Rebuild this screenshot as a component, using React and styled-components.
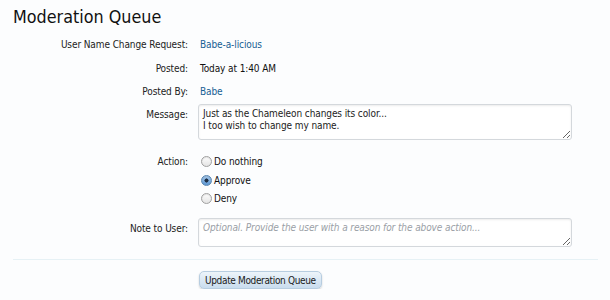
import React from "react";
import styled, { createGlobalStyle } from "styled-components";

const Global = createGlobalStyle`
  html, body { margin: 0; padding: 0; background: #fcfdfe; }
  body { font-family: Tahoma, "DejaVu Sans Condensed", "DejaVu Sans", sans-serif; font-size: 10px; letter-spacing: -0.1px; color: #000; }
`;

const Page = styled.div`
  padding: 5px 13px 0 13px;
  width: 585px;
`;

const Title = styled.h1`
  margin: 0 0 8px 0;
  font-size: 17.8px;
  font-weight: normal;
  letter-spacing: 0;
  color: #111;
  line-height: 24px;
`;

const Form = styled.div`
  display: flex;
  flex-direction: column;
`;

const Row = styled.div`
  display: grid;
  grid-template-columns: 175px 1fr;
  column-gap: 11px;
  align-items: start;
  margin-bottom: ${(p) => p.$mb ?? 8.5}px;
`;

const Label = styled.div`
  text-align: right;
  color: #222;
  line-height: 15px;
  padding-top: ${(p) => p.$pt ?? 0}px;
`;

const Value = styled.div`
  line-height: 15px;
  color: #111;
  padding-left: 1px;
`;

const Link = styled.a`
  color: #176093;
  text-decoration: none;
`;

const TextArea = styled.textarea`
  box-sizing: border-box;
  width: 374px;
  height: ${(p) => p.$h}px;
  margin-left: -1px;
  display: block;
  font-family: inherit;
  font-size: 10px;
  letter-spacing: -0.1px;
  line-height: 12px;
  color: #222;
  padding: 3px 4px;
  border: 1px solid #d4d8dc;
  border-radius: 3px;
  background: #fff;
  box-shadow: inset 0 1px 2px rgba(0,0,0,0.08);
  resize: vertical;
  &::placeholder { color: #9aa0a6; font-style: italic; }
`;

const Options = styled.div`
  display: flex;
  flex-direction: column;
  gap: 3.5px;
`;

const Option = styled.label`
  display: flex;
  align-items: center;
  gap: 2px;
  line-height: 15px;
  color: #111;
`;

const RadioDot = styled.span`
  box-sizing: border-box;
  width: 11px;
  height: 11px;
  border-radius: 50%;
  margin-left: 2px;
  border: 1px solid ${(p) => (p.$on ? "#5a86b0" : "#a0a0a0")};
  background: ${(p) =>
    p.$on
      ? "radial-gradient(circle at 50% 50%, #1d2f45 0 1.8px, transparent 2.3px), linear-gradient(#a9cbed, #5a95d2)"
      : "linear-gradient(#fdfdfd, #e4e4e4)"};
  box-shadow: inset 0 1px 1px rgba(0,0,0,0.1);
`;

const Divider = styled.hr`
  border: 0;
  height: 1px;
  background: #e6f1f5;
  margin: 12px 0 11px 0;
`;

const ButtonRow = styled.div`
  padding-left: 186px;
`;

const Button = styled.button`
  font-family: inherit;
  font-size: 10px;
  letter-spacing: -0.35px;
  color: #1a1a1a;
  height: 18px;
  padding: 0 5px;
  border: 1px solid #b7cde0;
  border-radius: 5px;
  background: linear-gradient(#edf4fa, #c9dcee);
  box-shadow: 0 1px 2px rgba(0,0,0,0.18);
  cursor: pointer;
`;

export default function App() {
  return (
    <>
      <Global />
      <Page>
        <Title>Moderation Queue</Title>
        <Form>
          <Row>
            <Label>User Name Change Request:</Label>
            <Value><Link href="#">Babe-a-licious</Link></Value>
          </Row>
          <Row>
            <Label>Posted:</Label>
            <Value>Today at 1:40 AM</Value>
          </Row>
          <Row $mb={5}>
            <Label>Posted By:</Label>
            <Value><Link href="#">Babe</Link></Value>
          </Row>
          <Row $mb={14}>
            <Label $pt={3}>Message:</Label>
            <TextArea
              $h={36}
              defaultValue={"Just as the Chameleon changes its color...\nI too wish to change my name."}
            />
          </Row>
          <Row $mb={12}>
            <Label>Action:</Label>
            <Options>
              <Option><RadioDot />Do nothing</Option>
              <Option><RadioDot $on />Approve</Option>
              <Option><RadioDot />Deny</Option>
            </Options>
          </Row>
          <Row $mb={0}>
            <Label $pt={3}>Note to User:</Label>
            <TextArea $h={29} placeholder="Optional. Provide the user with a reason for the above action..." />
          </Row>
        </Form>
        <Divider />
        <ButtonRow>
          <Button>Update Moderation Queue</Button>
        </ButtonRow>
      </Page>
    </>
  );
}
